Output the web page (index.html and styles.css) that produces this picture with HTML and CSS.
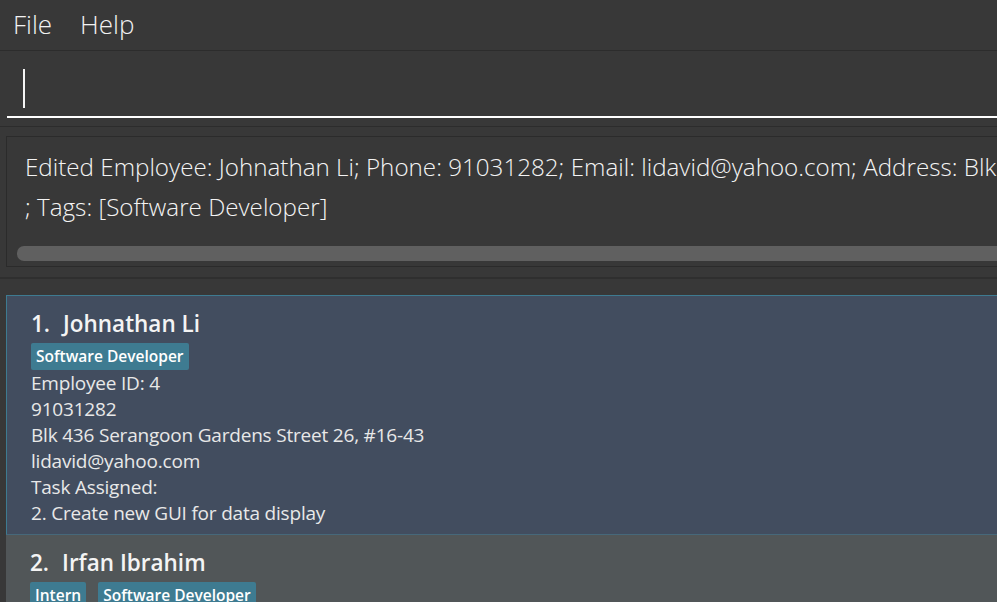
FILE: index.html
```html
<!DOCTYPE html>
<html lang="en">
<head>
<meta charset="utf-8">
<title>Employee Book</title>
<link rel="stylesheet" href="styles.css">
</head>
<body>
<div class="window">
  <nav class="menubar">
    <span class="menu-item">File</span>
    <span class="menu-item">Help</span>
  </nav>
  <section class="command-pane">
    <div class="command-field"><span class="caret"></span></div>
  </section>
  <section class="result-pane">
    <div class="result-box">
      <p class="result-text">Edited Employee: Johnathan Li; Phone: 91031282; Email: lidavid@yahoo.com; Address: Blk 436 Serangoon Gardens Street 26, #16-43<br>; Tags: [Software Developer]</p>
      <div class="hscroll"><div class="thumb"></div></div>
    </div>
  </section>
  <section class="list-pane">
    <ul class="list">
      <li class="card selected">
        <div class="name"><span class="idx">1.</span>Johnathan Li</div>
        <div class="tags"><span class="tag">Software Developer</span></div>
        <div class="detail">Employee ID: 4</div>
        <div class="detail">91031282</div>
        <div class="detail">Blk 436 Serangoon Gardens Street 26, #16-43</div>
        <div class="detail">lidavid@yahoo.com</div>
        <div class="detail">Task Assigned:</div>
        <div class="detail">2. Create new GUI for data display</div>
      </li>
      <li class="card odd">
        <div class="name"><span class="idx">2.</span>Irfan Ibrahim</div>
        <div class="tags"><span class="tag">Intern</span><span class="tag">Software Developer</span></div>
      </li>
    </ul>
  </section>
</div>
</body>
</html>
```

FILE: styles.css
```css
html, body {
  margin: 0;
  padding: 0;
  overflow: hidden;
  background: #383838;
}
.window {
  width: 1200px;
  height: 602px;
  background: #383838;
  font-family: "Open Sans", sans-serif;
  color: #ffffff;
  display: flex;
  flex-direction: column;
}
.menubar {
  flex: none;
  height: 51px;
  border-bottom: 1px solid #2c2c2c;
  display: flex;
  align-items: center;
  gap: 28px;
  padding-left: 13px;
  padding-bottom: 2px;
  box-sizing: border-box;
}
.menu-item {
  font-size: 26px;
  font-weight: 300;
  color: #f2f2f2;
  line-height: 1;
}
.command-pane {
  flex: none;
  height: 76px;
  border-bottom: 1px solid #2c2c2c;
  padding-left: 7px;
  box-sizing: border-box;
}
.command-field {
  height: 67px;
  border-bottom: 2px solid #ffffff;
  display: flex;
  align-items: flex-end;
  padding-left: 16px;
  padding-bottom: 8px;
  box-sizing: border-box;
}
.caret {
  display: block;
  width: 2px;
  height: 39px;
  background: #f4f4f4;
}
.result-pane {
  flex: none;
  padding: 9px 0 0 6px;
  height: 152px;
  box-sizing: border-box;
  border-bottom: 2px solid #2f2f2f;
}
.result-box {
  height: 131px;
  border: 1px solid #2b2b2b;
  border-right: none;
  box-sizing: border-box;
  padding: 10px 0 0 18px;
}
.result-text {
  margin: 0;
  font-size: 24.2px;
  font-weight: 300;
  line-height: 40px;
  color: #f4f4f4;
  white-space: nowrap;
}
.hscroll {
  margin-top: 19px;
  margin-left: -8px;
  height: 15px;
}
.thumb {
  height: 15px;
  border-radius: 7px;
  background: #606060;
  width: 1100px;
}
.list-pane {
  flex: 1;
  padding: 16px 0 0 6px;
  overflow: hidden;
}
.list {
  list-style: none;
  margin: 0;
  padding: 0;
}
.card {
  padding: 13px 0 8px 24px;
}
.card.selected {
  background: #424d5f;
  border: 1px solid #3e7b91;
  border-right: none;
  border-bottom-color: #46687a;
}
.card.odd {
  background: #515658;
}
.name {
  font-size: 22.5px;
  font-weight: 600;
  line-height: 30px;
  color: #f4f4f4;
}
.idx {
  margin-right: 13px;
}
.tags {
  display: flex;
  gap: 12px;
  margin-top: 4px;
}
.tag {
  background: #3e7b91;
  color: #ffffff;
  font-size: 15.5px;
  font-weight: 600;
  line-height: 27px;
  padding: 0 5px;
  border-radius: 2px;
}
.detail {
  font-size: 19px;
  letter-spacing: -0.2px;
  line-height: 26px;
  color: #e8e8e8;
}
```
